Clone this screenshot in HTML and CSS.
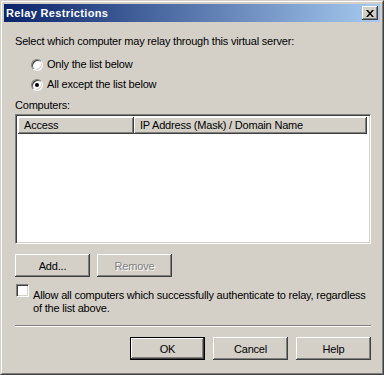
FILE: index.html
```html
<!DOCTYPE html>
<html lang="en">
<head>
    <meta charset="UTF-8">
    <title>Relay Restrictions</title>
    <link rel="stylesheet" href="styles.css">
</head>
<body>
    <div class="window">
        <div class="frame">
            <div class="titlebar">
                <span class="title">Relay Restrictions</span>
                <button class="close">
                    <svg width="8" height="7" viewBox="0 0 8 7"><path d="M0 0h2l2 2.5 2-2.5h2l-3 3.5 3 3.5h-2l-2-2.5-2 2.5h-2l3-3.5z" fill="#000"/></svg>
                </button>
            </div>
            <div class="content">
                <div class="prompt">Select which computer may relay through this virtual server:</div>
                <div class="options">
                    <label class="option"><span class="radio"></span>Only the list below</label>
                    <label class="option"><span class="radio checked"></span>All except the list below</label>
                </div>
                <div class="caption">Computers:</div>
                <div class="listbox">
                    <div class="header">
                        <div class="col col-access">Access</div>
                        <div class="col col-ip">IP Address (Mask) / Domain Name</div>
                    </div>
                </div>
                <div class="list-buttons">
                    <button class="btn">Add...</button>
                    <button class="btn disabled">Remove</button>
                </div>
                <div class="auth">
                    <span class="checkbox"></span>
                    <div class="auth-text">Allow all computers which successfully authenticate to relay, regardless<br>of the list above.</div>
                </div>
                <div class="separator"></div>
                <div class="dialog-buttons">
                    <button class="btn default">OK</button>
                    <button class="btn">Cancel</button>
                    <button class="btn">Help</button>
                </div>
            </div>
        </div>
    </div>
</body>
</html>
```
FILE: styles.css
```css
body {
    margin: 0;
    font-family: 'Liberation Sans', Arial, sans-serif;
    font-size: 11px;
    line-height: 13px;
    letter-spacing: -0.2px;
    color: #000;
    background: #d4d0c8;
}
.window {
    width: 384px;
    height: 375px;
    box-sizing: border-box;
    border: 1px solid;
    border-color: #d4d0c8 #404040 #404040 #d4d0c8;
    background: #d4d0c8;
}
.frame {
    height: 100%;
    box-sizing: border-box;
    border: 1px solid;
    border-color: #fff #808080 #808080 #fff;
    padding: 2px;
}
.titlebar {
    height: 18px;
    display: flex;
    align-items: center;
    justify-content: space-between;
    padding: 0 2px 0 2px;
    background: linear-gradient(to right, #0a246a, #a6caf0);
}
.title {
    color: #fff;
    font-weight: bold;
    line-height: 18px;
    letter-spacing: 0.35px;
}
.close {
    width: 16px;
    height: 14px;
    padding: 0;
    display: flex;
    align-items: center;
    justify-content: center;
    background: #d4d0c8;
    border: none;
    box-shadow: inset -1px -1px #404040, inset 1px 1px #fff, inset -2px -2px #808080;
}
.content {
    padding: 13px 9px 0 11px;
}
.options {
    margin-top: 10px;
    padding-left: 16px;
    display: flex;
    flex-direction: column;
    gap: 7px;
}
.option {
    display: flex;
    align-items: center;
    gap: 4px;
}
.radio {
    width: 12px;
    height: 12px;
    box-sizing: border-box;
    border-radius: 50%;
    border: 1px solid;
    border-color: #808080 #fff #fff #808080;
    background: #fff;
    box-shadow: inset 1px 1px #404040, inset -1px -1px #d4d0c8;
    display: flex;
    align-items: center;
    justify-content: center;
}
.radio.checked::after {
    content: "";
    width: 4px;
    height: 4px;
    border-radius: 50%;
    background: #000;
}
.caption {
    margin-top: 8px;
}
.listbox {
    margin-top: 2px;
    height: 130px;
    box-sizing: border-box;
    border: 1px solid;
    border-color: #808080 #fff #fff #808080;
    box-shadow: inset 1px 1px #404040, inset -1px -1px #d4d0c8;
    background: #fff;
    padding: 2px 3px 0 2px;
}
.header {
    display: flex;
    height: 17px;
}
.col {
    box-sizing: border-box;
    background: #d4d0c8;
    line-height: 17px;
    padding-left: 6px;
    box-shadow: inset -1px -1px #404040, inset 1px 1px #fff, inset -2px -2px #808080;
}
.col-access {
    width: 116px;
}
.col-ip {
    flex: 1;
}
.btn {
    width: 75px;
    height: 23px;
    padding: 0;
    font-family: inherit;
    font-size: 11px;
    letter-spacing: -0.2px;
    color: #000;
    background: #d4d0c8;
    border: none;
    box-shadow: inset -1px -1px #404040, inset 1px 1px #fff, inset -2px -2px #808080;
}
.btn.disabled {
    color: #808080;
    text-shadow: 1px 1px #fff;
}
.btn.default {
    border: 1px solid #000;
}
.list-buttons {
    margin-top: 10px;
    display: flex;
    gap: 7px;
}
.auth {
    margin-top: 7px;
    display: flex;
    gap: 4px;
    padding-left: 1px;
}
.checkbox {
    flex: none;
    width: 13px;
    height: 13px;
    box-sizing: border-box;
    border: 1px solid;
    border-color: #808080 #fff #fff #808080;
    box-shadow: inset 1px 1px #404040, inset -1px -1px #d4d0c8;
    background: #fff;
}
.auth-text {
    margin-top: 5px;
    white-space: nowrap;
}
.separator {
    margin-top: 10px;
    border-top: 1px solid #808080;
    border-bottom: 1px solid #fff;
    height: 0;
}
.dialog-buttons {
    margin-top: 10px;
    display: flex;
    justify-content: flex-end;
    gap: 8px;
}
```
